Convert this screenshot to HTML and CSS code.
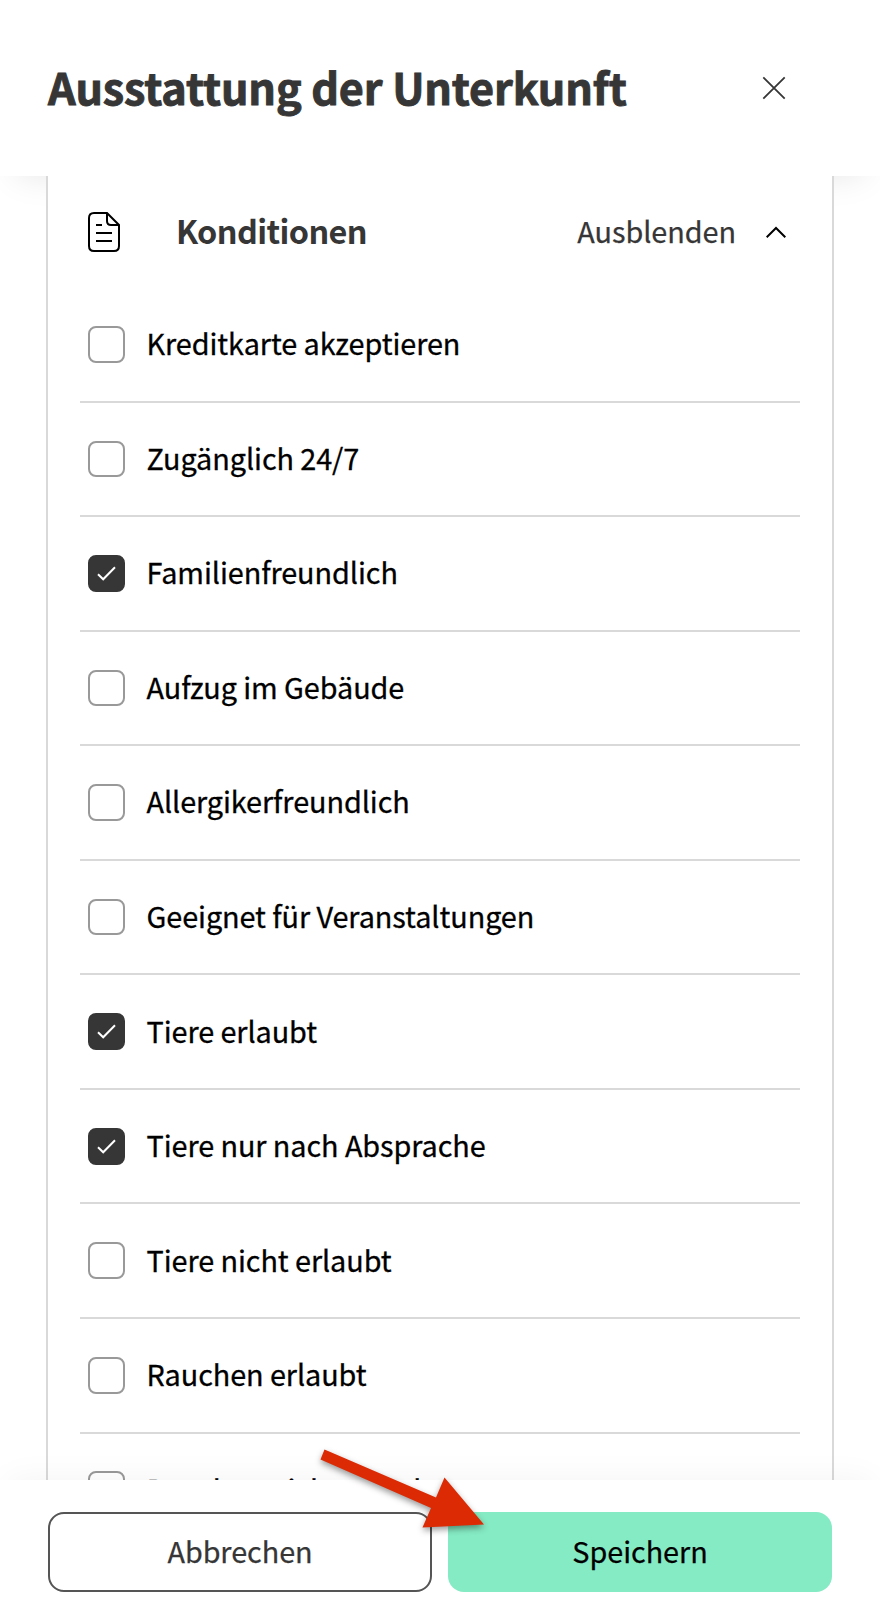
FILE: index.html
```html
<!DOCTYPE html>
<html lang="de">
<head>
<meta charset="utf-8">
<title>Ausstattung der Unterkunft</title>
<link rel="stylesheet" href="styles.css">
</head>
<body>
<div class="dialog">
  <header class="dialog-header">
    <h1 class="title">Ausstattung der Unterkunft</h1>
    <svg class="close" width="24" height="24" viewBox="0 0 24 24"><path d="M1.3 1.3 22.7 22.7M22.7 1.3 1.3 22.7"/></svg>
  </header>
  <main class="content">
    <section class="card">
      <div class="card-header">
        <svg class="doc" width="32" height="40" viewBox="0 0 32 40"><path d="M19 1H6Q1 1 1 6V34Q1 39 6 39H26Q31 39 31 34V13ZM19 1V9Q19 13 23 13H31M8 13H14M8 21H24M8 29H24"/></svg>
        <h2 class="card-title">Konditionen</h2>
        <span class="toggle">Ausblenden</span>
        <svg class="chevron" width="20" height="12" viewBox="0 0 20 12"><path d="M.7 11.2 10 2 19.3 11.2"/></svg>
      </div>
      <ul class="list">
        <li class="row"><span class="box"></span><span class="label">Kreditkarte akzeptieren</span></li>
        <li class="row"><span class="box"></span><span class="label">Zugänglich 24/7</span></li>
        <li class="row"><span class="box checked"><svg class="check" width="19" height="15" viewBox="0 0 19 15"><path d="M1 8.2 6.2 13.3 18 1.2"/></svg></span><span class="label">Familienfreundlich</span></li>
        <li class="row"><span class="box"></span><span class="label">Aufzug im Gebäude</span></li>
        <li class="row"><span class="box"></span><span class="label">Allergikerfreundlich</span></li>
        <li class="row"><span class="box"></span><span class="label">Geeignet für Veranstaltungen</span></li>
        <li class="row"><span class="box checked"><svg class="check" width="19" height="15" viewBox="0 0 19 15"><path d="M1 8.2 6.2 13.3 18 1.2"/></svg></span><span class="label">Tiere erlaubt</span></li>
        <li class="row"><span class="box checked"><svg class="check" width="19" height="15" viewBox="0 0 19 15"><path d="M1 8.2 6.2 13.3 18 1.2"/></svg></span><span class="label">Tiere nur nach Absprache</span></li>
        <li class="row"><span class="box"></span><span class="label">Tiere nicht erlaubt</span></li>
        <li class="row"><span class="box"></span><span class="label">Rauchen erlaubt</span></li>
        <li class="row"><span class="box"></span><span class="label">Rauchen nicht erlaubt</span></li>
      </ul>
    </section>
  </main>
  <footer class="dialog-footer">
    <button class="btn cancel">Abbrechen</button>
    <button class="btn save">Speichern</button>
  </footer>
  <svg class="arrow" width="200" height="110" viewBox="0 0 200 110"><path d="M24.5 19.5 136 67.5 144.5 47.5 184 94.5 122.5 97.5 131 78 20.5 29.5Z"/></svg>
</div>
</body>
</html>
```
FILE: styles.css
```css
* { box-sizing: border-box; }
body {
  margin: 0;
  background: #fff;
  font-family: "Noto Sans CJK SC", "Noto Sans", sans-serif;
  color: #363636;
}
.dialog {
  position: relative;
  display: flex;
  flex-direction: column;
  width: 880px;
  height: 1622px;
  overflow: hidden;
}
.dialog-header {
  display: flex;
  justify-content: space-between;
  flex: none;
  height: 176px;
  padding: 53px 94px 0 48px;
  box-shadow: 0 16px 32px -16px rgba(0, 0, 0, .1);
}
.title {
  margin: 0;
  font-size: 43.2px;
  line-height: 66px;
  font-weight: 700;
  letter-spacing: -.14px;
  white-space: nowrap;
  -webkit-text-stroke: .9px #363636;
}
.close { margin-top: 23px; fill: none; stroke: #363636; stroke-width: 1.8; }
.content {
  flex: 1;
  min-height: 0;
  padding: 0 46px;
  overflow: hidden;
}
.card {
  position: relative;
  padding: 0 32px;
  border: solid #d9d9d9;
  border-width: 0 2px;
  background: #fff;
}
.card-header {
  display: flex;
  align-items: center;
  height: 112.36px;
  padding: 0 14px 0 8px;
}
.doc { fill: none; stroke: #000; stroke-width: 2; }
.card-title {
  flex: 1;
  margin: 0 0 5px 56px;
  font-size: 32.4px;
  font-weight: 700;
  letter-spacing: -.6px;
}
.toggle {
  margin: 0 30px 4px 0;
  font-size: 28.8px;
  letter-spacing: -.05px;
  -webkit-text-stroke: .25px #363636;
}
.chevron { fill: none; stroke: #000; stroke-width: 2; }
.list { margin: 0; padding: 0; list-style: none; }
.row {
  display: flex;
  align-items: center;
  gap: 21.5px;
  height: 114.52px;
  padding-left: 8px;
  border-bottom: 2px solid #d9d9d9;
}
.box {
  display: flex;
  align-items: center;
  justify-content: center;
  width: 37px;
  height: 36.6px;
  border: 2px solid #999;
  border-radius: 8px;
}
.checked { border-color: #363636; background: #363636; }
.check { fill: none; stroke: #fff; stroke-width: 2; }
.label {
  padding-bottom: 3.4px;
  font-size: 28.8px;
  letter-spacing: -.07px;
  color: #000;
  -webkit-text-stroke: .3px #000;
}
.dialog-footer {
  position: relative;
  display: grid;
  grid-template-columns: 1fr 1fr;
  gap: 16px;
  flex: none;
  height: 142px;
  padding: 32px 48px 30px;
  background: #fff;
  box-shadow: 0 -8px 32px -8px rgba(0, 0, 0, .05);
}
.btn {
  padding: 0 0 4px;
  border: 0 solid;
  border-radius: 16px;
  font: 28.8px "Noto Sans CJK SC", "Noto Sans", sans-serif;
  letter-spacing: -.05px;
  -webkit-text-stroke: .25px;
}
.cancel { border: 2px solid #555; background: #fff; color: #363636; }
.save { background: #85ebc4; color: #000; }
.arrow {
  position: absolute;
  left: 300px;
  top: 1430px;
  fill: #dc2a04;
  filter: drop-shadow(0 3px 3px rgba(0, 0, 0, .4));
}
```
